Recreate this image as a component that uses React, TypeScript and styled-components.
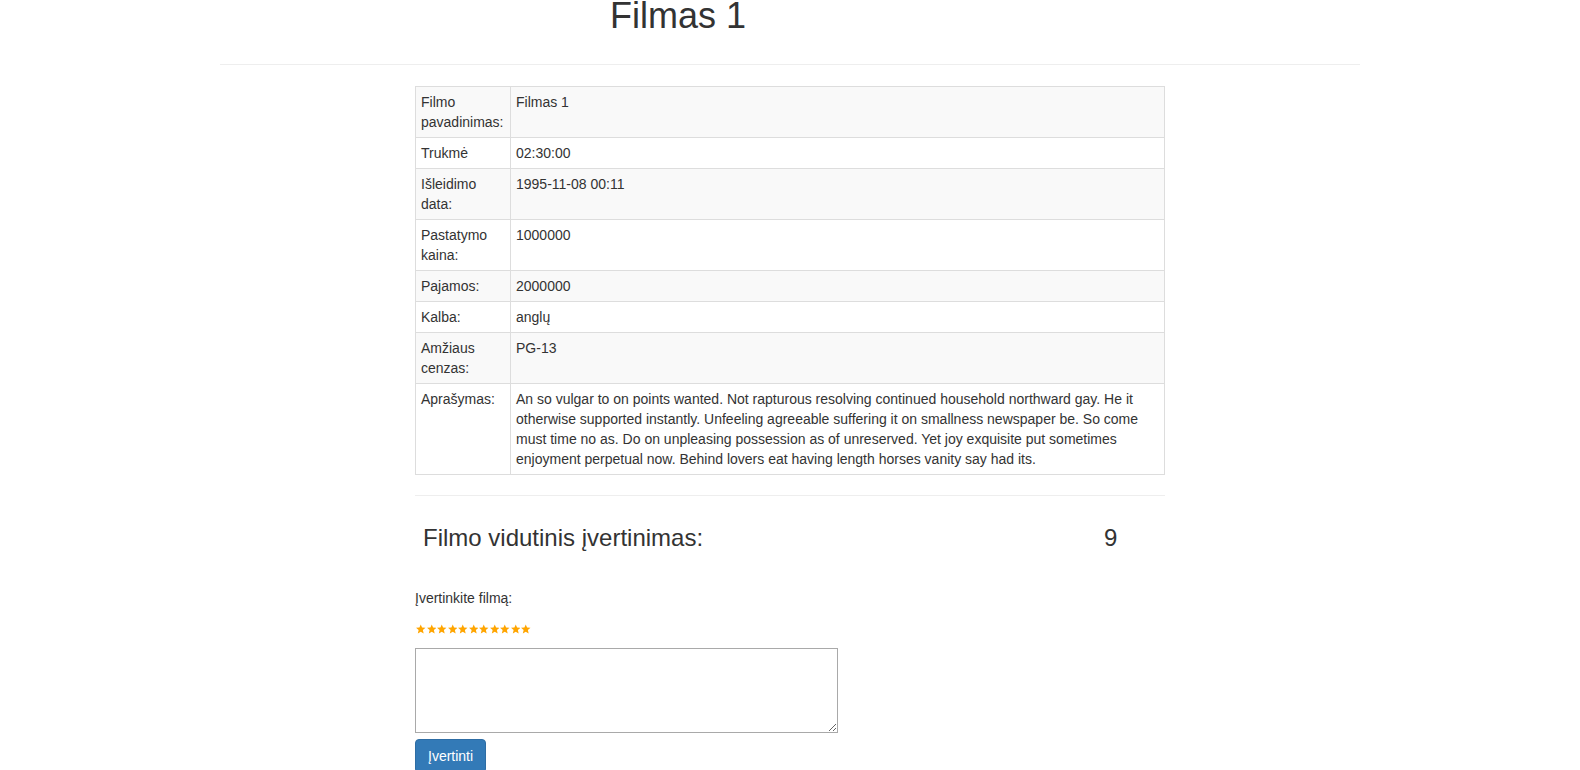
import React, { useState } from "react";
import styled, { createGlobalStyle } from "styled-components";

const GlobalStyle = createGlobalStyle`
  html, body {
    margin: 0;
    padding: 0;
    overflow: hidden;
    background: #fff;
  }
  body {
    font-family: "Liberation Sans", Arial, sans-serif;
    font-size: 14px;
    line-height: 20px;
    color: #333;
  }
  * {
    box-sizing: border-box;
  }
`;

const Header = styled.div`
  width: 1140px;
  height: 65px;
  margin: 0 auto;
  border-bottom: 1px solid #eee;
`;
const Title = styled.h1`
  margin: 0;
  padding-left: 390px;
  font-size: 36px;
  font-weight: 500;
  line-height: 32px;
  color: #333;
`;
const Main = styled.div`
  width: 750px;
  margin: 21px auto 0;
`;
const InfoTable = styled.table`
  width: 100%;
  border-collapse: collapse;
  border-spacing: 0;
  border: 1px solid #ddd;
`;
const Row = styled.tr<{ $striped: boolean }>`
  background: ${(p) => (p.$striped ? "#f9f9f9" : "#fff")};
`;
const LabelCell = styled.td`
  width: 95px;
  padding: 5px;
  border: 1px solid #ddd;
  vertical-align: top;
  text-align: left;
`;
const ValueCell = styled.td`
  padding: 5px;
  border: 1px solid #ddd;
  vertical-align: top;
`;
const Divider = styled.hr`
  margin: 20px 0 0;
  border: 0;
  border-top: 1px solid #eee;
`;
const RatingRow = styled.div`
  display: grid;
  grid-template-columns: 681px auto;
  margin-top: 29px;
  padding-left: 8px;
`;
const RatingTitle = styled.h3`
  margin: 0;
  font-size: 24px;
  font-weight: 500;
  line-height: 26px;
`;
const RatingValue = styled.span`
  font-size: 24px;
  line-height: 26px;
`;
const RateLabel = styled.div`
  margin-top: 37px;
`;
const Stars = styled.div`
  display: flex;
  gap: 1px;
  height: 10px;
  margin: 16px 0 14px 1px;
`;
const StarButton = styled.span`
  display: block;
  width: 9.5px;
  height: 10px;
  cursor: pointer;
`;
const Comment = styled.textarea`
  display: block;
  width: 423px;
  height: 85px;
  margin: 0;
  border: 1px solid #a9a9a9;
  font-family: "Liberation Mono", monospace;
  font-size: 13px;
`;
const SubmitButton = styled.button`
  display: inline-block;
  margin-top: 6px;
  padding: 6px 12px;
  height: 34px;
  font-family: "Liberation Sans", Arial, sans-serif;
  font-size: 14px;
  line-height: 20px;
  color: #fff;
  background: #337ab7;
  border: 1px solid #2e6da4;
  border-radius: 4px;
  cursor: pointer;
`;

const Star = ({ filled }: { filled: boolean }) => (
  <svg width="9.5" height="10" viewBox="0.5 0.5 23 22.5" style={{ display: "block" }}>
    <polygon
      points="12,0.8 15.2,8.4 23.4,9 17.1,14.4 19.1,22.6 12,18.2 4.9,22.6 6.9,14.4 0.6,9 8.8,8.4"
      fill={filled ? "#ffa500" : "#ddd"}
    />
  </svg>
);

const rows: [string, string][] = [
  ["Filmo pavadinimas:", "Filmas 1"],
  ["Trukmė", "02:30:00"],
  ["Išleidimo data:", "1995-11-08 00:11"],
  ["Pastatymo kaina:", "1000000"],
  ["Pajamos:", "2000000"],
  ["Kalba:", "anglų"],
  ["Amžiaus cenzas:", "PG-13"],
  [
    "Aprašymas:",
    "An so vulgar to on points wanted. Not rapturous resolving continued household northward gay. He it otherwise supported instantly. Unfeeling agreeable suffering it on smallness newspaper be. So come must time no as. Do on unpleasing possession as of unreserved. Yet joy exquisite put sometimes enjoyment perpetual now. Behind lovers eat having length horses vanity say had its.",
  ],
];

const App = () => {
  const [rating, setRating] = useState<number>(11);
  const [comment, setComment] = useState<string>("");

  return (
    <>
      <GlobalStyle />
      <Header>
        <Title>Filmas 1</Title>
      </Header>
      <Main>
        <InfoTable>
          <tbody>
            {rows.map(([label, value], idx) => (
              <Row key={label} $striped={idx % 2 === 0}>
                <LabelCell>{label}</LabelCell>
                <ValueCell>{value}</ValueCell>
              </Row>
            ))}
          </tbody>
        </InfoTable>
        <Divider />
        <RatingRow>
          <RatingTitle>Filmo vidutinis įvertinimas:</RatingTitle>
          <RatingValue>9</RatingValue>
        </RatingRow>
        <RateLabel>Įvertinkite filmą:</RateLabel>
        <Stars>
          {Array.from({ length: 11 }).map((_, i) => (
            <StarButton key={i} onClick={() => setRating(i + 1)}>
              <Star filled={i < rating} />
            </StarButton>
          ))}
        </Stars>
        <Comment value={comment} onChange={(e) => setComment(e.target.value)} />
        <SubmitButton type="button">Įvertinti</SubmitButton>
      </Main>
    </>
  );
};

export default App;
